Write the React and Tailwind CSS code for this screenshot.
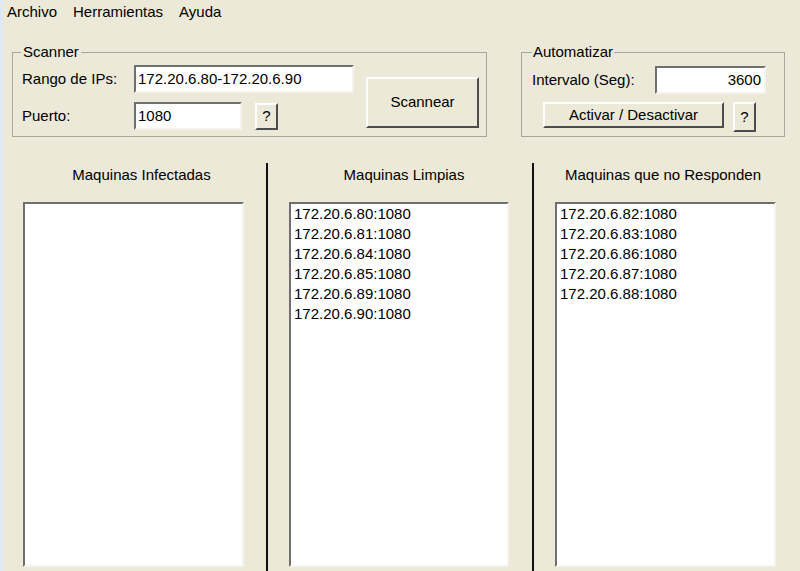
import React from 'react';

const sunken = 'bg-white border-2 border-t-[#6f6f6f] border-l-[#6f6f6f] border-r-[#f4f3ee] border-b-[#f4f3ee]';
const raised = 'flex items-center justify-center bg-[#ece9d8] border-2 border-t-white border-l-white border-r-[#4d4d4d] border-b-[#4d4d4d]';

const limpias = [
  '172.20.6.80:1080',
  '172.20.6.81:1080',
  '172.20.6.84:1080',
  '172.20.6.85:1080',
  '172.20.6.89:1080',
  '172.20.6.90:1080',
];

const noResponden = [
  '172.20.6.82:1080',
  '172.20.6.83:1080',
  '172.20.6.86:1080',
  '172.20.6.87:1080',
  '172.20.6.88:1080',
];

const ListBox = ({ items, className }) => (
  <div className={`${sunken} h-[365px] mt-[17px] pl-[3px] ${className}`}>
    {items.map((ip) => (
      <div key={ip} className="leading-[20px]">{ip}</div>
    ))}
  </div>
);

export default function App() {
  return (
    <div className="h-[571px] w-[800px] overflow-hidden bg-[#ece9d8] border-l-[3px] border-[#e0e8f3] text-black text-[15px] font-['Liberation_Sans',Arial,sans-serif]">
      {/* menu */}
      <div className="flex h-[24px] items-center gap-[16px] pl-[4px]">
        <span>Archivo</span>
        <span>Herramientas</span>
        <span>Ayuda</span>
      </div>

      {/* top panels */}
      <div className="flex mt-[20px] pl-[9px]">
        <fieldset className="w-[475px] h-[93px] border border-[#a9a797] pl-[8px]">
          <legend className="px-[2px] leading-[16px]">Scanner</legend>
          <div className="flex ml-[1px] mt-[5px]">
            <div>
              <div className="flex items-center">
                <span className="w-[112px]">Rango de IPs:</span>
                <div className={`${sunken} w-[220px] h-[28px] pl-[2px] flex items-center`}>172.20.6.80-172.20.6.90</div>
              </div>
              <div className="flex items-center mt-[9px]">
                <span className="w-[112px]">Puerto:</span>
                <div className={`${sunken} w-[108px] h-[28px] pl-[2px] flex items-center`}>1080</div>
                <button className={`${raised} ml-[13px] w-[23px] h-[27px]`}>?</button>
              </div>
            </div>
            <button className={`${raised} ml-[12px] mt-[12px] w-[113px] h-[51px]`}>Scannear</button>
          </div>
        </fieldset>

        <fieldset className="ml-[34px] w-[264px] h-[93px] border border-[#a9a797] pl-[10px]">
          <legend className="px-[1px] leading-[16px]">Automatizar</legend>
          <div className="flex items-center mt-[6px]">
            <span className="w-[123px]">Intervalo (Seg):</span>
            <div className={`${sunken} w-[111px] h-[28px] pr-[3px] flex items-center justify-end`}>3600</div>
          </div>
          <div className="flex items-start mt-[8px] ml-[11px]">
            <button className={`${raised} w-[181px] h-[26px]`}>Activar / Desactivar</button>
            <button className={`${raised} ml-[9px] w-[23px] h-[30px]`}>?</button>
          </div>
        </fieldset>
      </div>

      {/* result columns */}
      <div className="flex mt-[26px] h-[408px]">
        <div className="w-[263px]">
          <div className="mt-[2px] leading-[20px] text-center pl-[14px]">Maquinas Infectadas</div>
          <ListBox items={[]} className="ml-[20px] w-[221px]" />
        </div>
        <div className="w-[2px] bg-[#111]" />
        <div className="w-[264px]">
          <div className="mt-[2px] leading-[20px] text-center pl-[8px]">Maquinas Limpias</div>
          <ListBox items={limpias} className="ml-[21px] w-[220px]" />
        </div>
        <div className="w-[2px] bg-[#111]" />
        <div className="flex-1">
          <div className="mt-[2px] leading-[20px] text-center pr-[8px]">Maquinas que no Responden</div>
          <ListBox items={noResponden} className="ml-[21px] w-[221px]" />
        </div>
      </div>
    </div>
  );
}
